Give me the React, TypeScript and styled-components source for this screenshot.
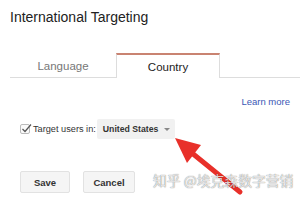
import React from 'react'
import styled, {createGlobalStyle} from 'styled-components'

const GlobalStyle = createGlobalStyle`
  html, body {
    margin: 0;
    padding: 0;
    background: #ffffff;
  }
  body {
    font-family: 'Liberation Sans', Arial, sans-serif;
  }
`

const Page = styled.div`
  position: relative;
  width: 300px;
  height: 200px;
  overflow: hidden;
  display: flex;
  flex-direction: column;
`

const Title = styled.h1`
  margin: 0;
  padding: 8px 0 0 10px;
  font-size: 14px;
  font-weight: normal;
  line-height: 18px;
  color: #222;
`

const TabRow = styled.div`
  display: flex;
  margin-top: 27px;
  padding-left: 10px;
  height: 25px;
`

const Tab = styled.div<{$active?: boolean}>`
  width: ${(p) => (p.$active ? '104px' : '106px')};
  display: flex;
  align-items: center;
  justify-content: center;
  font-size: 11.5px;
  color: ${(p) => (p.$active ? '#222' : '#777')};
  box-sizing: border-box;
  border-bottom: ${(p) => (p.$active ? 'none' : '1px solid #ddd')};
  border-top: ${(p) => (p.$active ? '2px solid #c98371' : 'none')};
  border-left: ${(p) => (p.$active ? '1px solid #ddd' : 'none')};
  border-right: ${(p) => (p.$active ? '1px solid #ddd' : 'none')};
  padding-top: ${(p) => (p.$active ? '0' : '2px')};
`

const TabFill = styled.div`
  flex: 1;
  border-bottom: 1px solid #ddd;
`

const LearnRow = styled.div`
  display: flex;
  justify-content: flex-end;
  padding: 18px 10px 0 0;
`

const Link = styled.a`
  font-size: 9.5px;
  line-height: 12px;
  color: #3b58b5;
  text-decoration: none;
`

const TargetRow = styled.div`
  display: flex;
  align-items: center;
  margin-top: 11px;
  padding-left: 20px;
  height: 20px;
`

const Check = styled.span`
  width: 10px;
  height: 10px;
  box-sizing: border-box;
  border: 1px solid #bbb;
  border-radius: 2px;
  background: #fafafa;
  position: relative;
  margin-right: 3px;
`

const CheckMark = styled.svg`
  position: absolute;
  left: 0;
  top: -2px;
`

const Label = styled.span`
  font-size: 9.2px;
  color: #333;
  margin-right: 1px;
`

const Select = styled.div`
  width: 78px;
  height: 20px;
  background: #f1f1f1;
  border-radius: 2px;
  display: flex;
  align-items: center;
  justify-content: space-between;
  padding: 0 5px 0 6px;
  box-sizing: border-box;
  font-size: 8.7px;
  font-weight: bold;
  color: #333;
`

const Caret = styled.span`
  width: 0;
  height: 0;
  border-left: 3px solid transparent;
  border-right: 3px solid transparent;
  border-top: 3px solid #888;
`

const Buttons = styled.div`
  display: flex;
  gap: 13px;
  margin-top: 32px;
  padding-left: 20px;
`

const Button = styled.button<{$w: number}>`
  width: ${(p) => p.$w}px;
  height: 22px;
  background: #f5f5f5;
  border: 1px solid #e2e2e2;
  border-radius: 2px;
  font-family: 'Liberation Sans', Arial, sans-serif;
  font-size: 9.5px;
  font-weight: bold;
  color: #333;
  padding: 0;
`

const ArrowLayer = styled.svg`
  position: absolute;
  left: 0;
  top: 0;
  pointer-events: none;
`

const Watermark = styled.div`
  position: absolute;
  left: 153px;
  top: 172px;
  font-family: 'Noto Sans CJK SC', 'Noto Sans', sans-serif;
  font-size: 13.8px;
  line-height: 16px;
  color: rgba(255, 255, 255, 0.8);
  text-shadow: 0 0 1px rgba(0, 0, 0, 0.4), 0 0 1px rgba(0, 0, 0, 0.3);
  white-space: nowrap;
`

export default function App() {
  return (
    <Page>
      <GlobalStyle />
      <Title>International Targeting</Title>
      <TabRow>
        <Tab>Language</Tab>
        <Tab $active>Country</Tab>
        <TabFill />
      </TabRow>
      <LearnRow>
        <Link href='#'>Learn more</Link>
      </LearnRow>
      <TargetRow>
        <Check>
          <CheckMark width='11' height='11' viewBox='0 0 11 11'>
            <path d='M1.5 6 L4 8.5 L10 1.5' fill='none' stroke='#555' strokeWidth='1.2' />
          </CheckMark>
        </Check>
        <Label>Target users in:</Label>
        <Select>
          <span>United States</span>
          <Caret />
        </Select>
      </TargetRow>
      <Buttons>
        <Button $w={50}>Save</Button>
        <Button $w={52}>Cancel</Button>
      </Buttons>
      <ArrowLayer width='300' height='200' viewBox='0 0 300 200'>
        <line x1='240' y1='192' x2='187' y2='149' stroke='#e8302a' strokeWidth='5' strokeLinecap='round' />
        <polygon points='175,138 201,145 187,163' fill='#e8302a' />
      </ArrowLayer>
      <Watermark>知乎 @埃克森数字营销</Watermark>
    </Page>
  )
}
